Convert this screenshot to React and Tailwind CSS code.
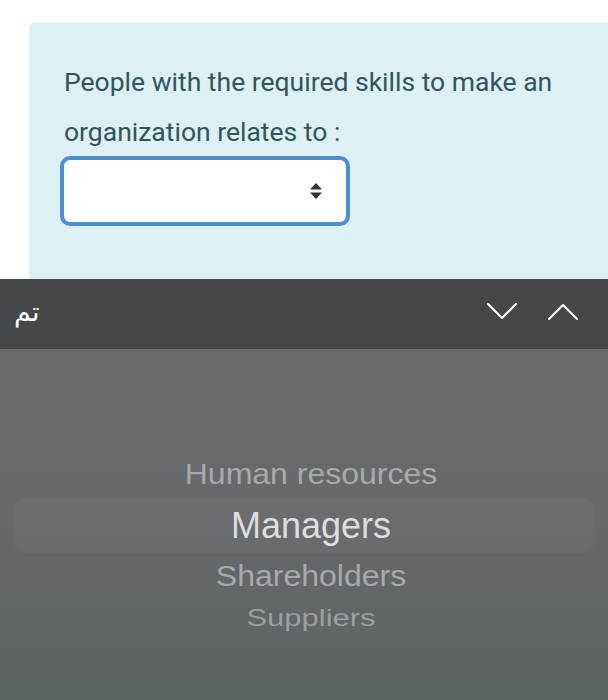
import React from "react";

const pickerItems = [
  { label: "Human resources", cls: "h-[40px] text-[32px] text-[#a9a9aa] scale-y-[0.9]" },
];

function SortArrows() {
  return (
    <svg width="14" height="18" viewBox="0 0 14 18" className="text-[#333]">
      <path d="M7 1 L13 7.5 L1 7.5 Z" fill="currentColor" />
      <path d="M7 17 L13 10.5 L1 10.5 Z" fill="currentColor" />
    </svg>
  );
}

function Chevron({ up }) {
  return (
    <svg width="32" height="20" viewBox="0 0 32 20" fill="none">
      <path
        d={up ? "M2 18 L16 4 L30 18" : "M2 3 L16 17 L30 3"}
        stroke="white"
        strokeWidth="2"
        strokeLinecap="round"
        strokeLinejoin="round"
      />
    </svg>
  );
}

export default function App() {
  return (
    <div className="flex h-[700px] w-full flex-col overflow-hidden bg-white font-['Liberation_Sans',Arial,sans-serif]">
      {/* question card */}
      <div className="flex h-[279px] pl-[29px] pt-[23px]">
        <div className="flex-1 rounded-tl-[5px] bg-[#dcf0f6] pl-[35px] pt-[34px]">
          <p className="font-['Roboto',sans-serif] text-[26.5px] leading-[50px] text-[#31545f]">
            People with the required skills to make an
            <br />
            organization relates to :
          </p>
          <div className="-ml-[4px] -mt-[1px] flex h-[70px] w-[290px] items-center justify-end rounded-[10px] border-[4px] border-[#4a8fd6] bg-white pr-[23px]">
            <SortArrows />
          </div>
        </div>
      </div>

      {/* keyboard accessory bar */}
      <div className="flex h-[70px] items-center justify-between bg-[#454748] pl-[14px] pr-[29px]">
        <span
          dir="rtl"
          className="pb-[4px] font-['DejaVu_Sans',sans-serif] text-[27px] text-white"
        >
          تم
        </span>
        <div className="flex items-center gap-[29px] pb-[6px]">
          <Chevron />
          <Chevron up />
        </div>
      </div>

      {/* wheel picker */}
      <div className="flex flex-1 flex-col items-center bg-gradient-to-b from-[#6a6b6d] via-[#666869] to-[#5d6466] px-[14px] pt-[105px] font-['Liberation_Sans',Arial,sans-serif]">
        {pickerItems.map((it) => (
          <div key={it.label} className={`flex items-center pl-[14px] leading-none ${it.cls}`}>
            {it.label}
          </div>
        ))}
        <div className="mt-[4px] flex h-[55px] w-full items-center justify-center rounded-[10px] bg-white/[0.03] pl-[14px]">
          <span className="text-[36px] leading-none text-[#dedede]">Managers</span>
        </div>
        <div className="mt-[3px] flex h-[40px] items-center pl-[14px] text-[32px] leading-none text-[#a9a9aa] scale-y-[0.9]">
          Shareholders
        </div>
        <div className="mt-[6px] flex h-[32px] items-center pl-[14px] text-[31px] leading-none text-[#9c9e9f] scale-y-[0.75]">
          Suppliers
        </div>
      </div>
    </div>
  );
}
